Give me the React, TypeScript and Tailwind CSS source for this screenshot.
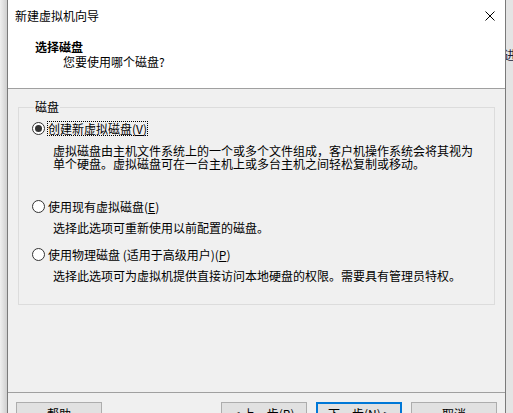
import React from "react";

const cjk = "font-['Noto_Sans_CJK_SC','Microsoft_YaHei',sans-serif]";

function Radio({ checked }: { checked?: boolean }) {
  return (
    <span className="flex h-[13px] w-[13px] shrink-0 items-center justify-center rounded-full border border-[#333333] bg-white">
      {checked && <span className="h-[7px] w-[7px] rounded-full bg-[#333333]" />}
    </span>
  );
}

function Boton({ texto, principal }: { texto: string; principal?: boolean }) {
  return (
    <button
      className={
        principal
          ? "flex h-[23px] w-[86px] items-center justify-center border-2 border-[#0078d7] bg-[#e1e1e1] text-[12px] leading-[14px] text-black"
          : "flex h-[23px] w-[86px] items-center justify-center border border-[#adadad] bg-[#e1e1e1] text-[12px] leading-[14px] text-black"
      }
    >
      {texto}
    </button>
  );
}

export default function App() {
  return (
    <div className={`flex h-[413px] w-[513px] overflow-hidden bg-[#f0f0f0] text-black ${cjk}`}>
      {/* sombra a la izquierda */}
      <div className="h-full w-[7px] shrink-0 bg-linear-to-r from-[#efefef] to-[#cfcfcf]" />

      <div className="flex h-full w-[499px] shrink-0 flex-col border-x border-[#7a7a7a] bg-[#f0f0f0]">
        {/* cabecera */}
        <div className="h-[89px] shrink-0 border-b border-[#a0a0a0] bg-white">
          <div className="flex h-[31px] items-center justify-between pl-[7px] pr-[10px]">
            <span className="text-[12px] leading-[14px]">新建虚拟机向导</span>
            <svg width="10" height="10" viewBox="0 0 10 10">
              <path d="M0.5 0.5 L9.5 9.5 M9.5 0.5 L0.5 9.5" stroke="#000" strokeWidth="1" />
            </svg>
          </div>
          <div className="mt-[9px] pl-[27px] text-[12px] font-bold leading-[14px]">选择磁盘</div>
          <div className="mt-[1px] pl-[55px] text-[12px] leading-[14px]">您要使用哪个磁盘?</div>
        </div>

        {/* cuerpo */}
        <div className="h-[303px] shrink-0 px-[10px] pt-[11px]">
          <fieldset className="h-[205px] border border-[#dcdcdc] pl-[13px] pt-[6px]">
            <legend className="ml-[2px] px-[1px] text-[12px] leading-[14px]">磁盘</legend>

            <div className="flex h-[16px] items-center">
              <Radio checked />
              <span className="ml-[2px] border border-dotted border-black px-0 text-[12px] leading-[13px]">
                创建新虚拟磁盘(<span className="underline underline-offset-1">V</span>)
              </span>
            </div>
            <div className="mt-[8px] pl-[21px] text-[12px] leading-[13px]">
              虚拟磁盘由主机文件系统上的一个或多个文件组成，客户机操作系统会将其视为
              <br />
              单个硬盘。虚拟磁盘可在一台主机上或多台主机之间轻松复制或移动。
            </div>

            <div className="mt-[28px] flex h-[16px] items-center">
              <Radio />
              <span className="ml-[3px] text-[12px] leading-[13px]">
                使用现有虚拟磁盘(<span className="underline underline-offset-1">E</span>)
              </span>
            </div>
            <div className="mt-[7px] pl-[21px] text-[12px] leading-[13px]">
              选择此选项可重新使用以前配置的磁盘。
            </div>

            <div className="mt-[12px] flex h-[16px] items-center">
              <Radio />
              <span className="ml-[3px] text-[12px] leading-[13px]">
                使用物理磁盘 (适用于高级用户)(<span className="underline underline-offset-1">P</span>)
              </span>
            </div>
            <div className="mt-[7px] pl-[21px] text-[12px] leading-[13px]">
              选择此选项可为虚拟机提供直接访问本地硬盘的权限。需要具有管理员特权。
            </div>
          </fieldset>
        </div>

        {/* botones */}
        <div className="flex shrink-0 justify-between border-t border-[#a0a0a0] px-[8px] pt-[9px]">
          <Boton texto="帮助" />
          <div className="flex gap-[9px]">
            <Boton texto="< 上一步(B)" />
            <Boton texto="下一步(N) >" principal />
            <Boton texto="取消" />
          </div>
        </div>
      </div>

      {/* ventana de detrás */}
      <div className="h-full w-[7px] shrink-0 overflow-hidden bg-[#e4e4e4] pt-[48px]">
        <div className="-ml-[2px] text-[12px] leading-[14px] text-[#1a1a3a]">进</div>
      </div>
    </div>
  );
}
